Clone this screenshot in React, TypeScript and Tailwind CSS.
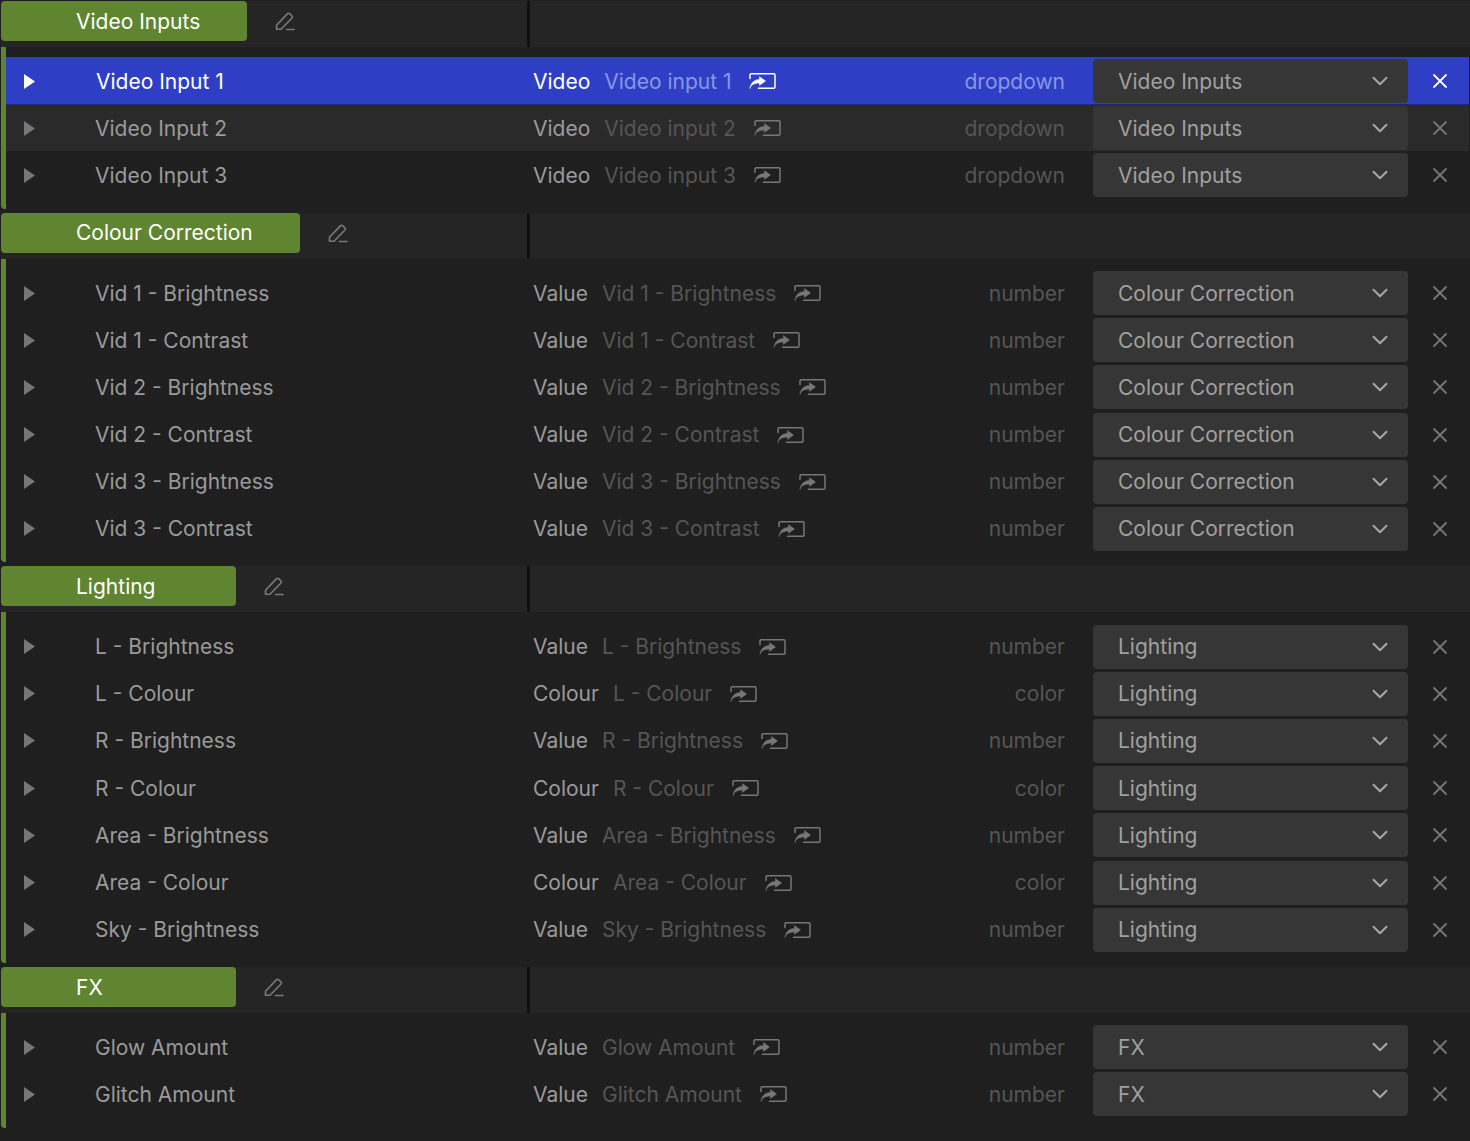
import { ChevronDown, X } from "lucide-react";

type Param = { name: string; kind: string; label: string; type: string };

type Group = { title: string; pill: string; params: Param[] };

const val = (name: string): Param => ({ name, kind: "Value", label: name, type: "number" });
const col = (name: string): Param => ({ name, kind: "Colour", label: name, type: "color" });

const groups: Group[] = [
  {
    title: "Video Inputs",
    pill: "w-[246px]",
    params: [
      { name: "Video Input 1", kind: "Video", label: "Video input 1", type: "dropdown" },
      { name: "Video Input 2", kind: "Video", label: "Video input 2", type: "dropdown" },
      { name: "Video Input 3", kind: "Video", label: "Video input 3", type: "dropdown" },
    ],
  },
  {
    title: "Colour Correction",
    pill: "w-[299px]",
    params: [
      val("Vid 1 - Brightness"),
      val("Vid 1 - Contrast"),
      val("Vid 2 - Brightness"),
      val("Vid 2 - Contrast"),
      val("Vid 3 - Brightness"),
      val("Vid 3 - Contrast"),
    ],
  },
  {
    title: "Lighting",
    pill: "w-[235px]",
    params: [
      val("L - Brightness"),
      col("L - Colour"),
      val("R - Brightness"),
      col("R - Colour"),
      val("Area - Brightness"),
      col("Area - Colour"),
      val("Sky - Brightness"),
    ],
  },
  {
    title: "FX",
    pill: "w-[235px]",
    params: [val("Glow Amount"), val("Glitch Amount")],
  },
];

const groupOf = (p: Param) => groups.find((g) => g.params.includes(p))?.title ?? "";

const PencilIcon = () => (
  <svg width="20" height="20" viewBox="0 0 20 20" fill="none" stroke="#7a7a7a" strokeWidth="1.6" strokeLinejoin="round" strokeLinecap="round">
    <path d="M1.500 18.200v-4L12.600 2.600a1.400 1.400 0 0 1 2 0l2.400 2.400a1.400 1.400 0 0 1 0 2L6 18.200H1.500Z" />
    <path d="M11.500 18.500h7.500" />
  </svg>
);

const LinkIcon = ({ active }: { active: boolean }) => (
  <svg width="27" height="16" viewBox="0 0 27 16" fill="none" stroke={active ? "#fff" : "#777"} strokeWidth="1.500" strokeLinejoin="round" className="shrink-0">
    <path d="M1 5.500V2a1.200 1.200 0 0 1 1.200-1.200h22.600a1.200 1.200 0 0 1 1.200 1.200v12a1.200 1.200 0 0 1-1.200 1.200H9.500" strokeLinecap="round" />
    <path
      d="M1 15.500c.8-3.400 3.600-5.400 9.500-5.500V12.300L16.500 8l-6-4.300v2.700C5.200 6.800 1.800 9.500 1 15.500Z"
      fill={active ? "#fff" : "#777"}
      strokeWidth="0.600"
    />
  </svg>
);

const Row = ({ p, active, striped }: { p: Param; active: boolean; striped: boolean }) => (
  <div
    className={`mr-px flex h-[47.2px] items-center pt-px ${
      active ? "relative z-10 bg-[#2e3fc6] shadow-[0_1px_0_#1d2a7e]" : striped ? "bg-[#2a2a2a]" : ""
    }`}
  >
    <svg width="11" height="15" viewBox="0 0 11 15" className="ml-[18px] shrink-0">
      <path d="M0 0l11 7.500L0 15Z" fill={active ? "#fff" : "#777"} />
    </svg>
    <span className={`ml-[60px] w-[438px] shrink-0 ${active ? "pl-px text-white" : "text-[#9a9a9a]"}`}>{p.name}</span>
    <span className={active ? "text-white" : "text-[#9a9a9a]"}>{p.kind}</span>
    <span className={`ml-[14px] ${active ? "text-[#8a97e3]" : "text-[#555555]"}`}>{p.label}</span>
    <span className={active ? "ml-[17px]" : "ml-[18px]"}>
      <LinkIcon active={active} />
    </span>
    <span className={`ml-auto ${active ? "text-[#8a97e3]" : "text-[#555555]"}`}>{p.type}</span>
    <div className="ml-[28px] flex h-[44px] w-[315px] shrink-0 items-center justify-between rounded-[4px] bg-[#363636] pl-[25px] pr-[15px] text-[#a0a0a0]">
      <span>{groupOf(p)}</span>
      <ChevronDown size={26} strokeWidth={1.9} className="text-[#a6a6a6]" />
    </div>
    <div className={`flex w-[61px] shrink-0 justify-center pl-[3px] ${active ? "text-white" : "text-[#777]"}`}>
      <X size={24} strokeWidth={1.8} />
    </div>
  </div>
);

export default function App() {
  return (
    <div className="min-h-[1141px] w-[1470px] bg-[#1f1f1f] pt-px font-['Inter',sans-serif] text-[21px] leading-none">
      {groups.map((g) => (
        <section key={g.title} className="relative mb-[4.4px] pl-px">
          <div className="flex h-[46px] bg-[#252525]">
            <div className={`flex h-[40px] shrink-0 items-center rounded-[4px] bg-[#5f8530] pl-[75px] text-white ${g.pill}`}>{g.title}</div>
            <div className="ml-[28px] mt-[10px] self-start">
              <PencilIcon />
            </div>
            <div className="absolute left-[527px] top-0 h-[46px] w-[3px] bg-[#111111]" />
          </div>
          <div className="rounded-bl-[4px] border-l-[5px] border-[#5f8530] py-[10px]">
            {g.params.map((p) => (
              <Row key={p.name} p={p} active={p.name === "Video Input 1"} striped={p.name === "Video Input 2"} />
            ))}
          </div>
        </section>
      ))}
    </div>
  );
}
